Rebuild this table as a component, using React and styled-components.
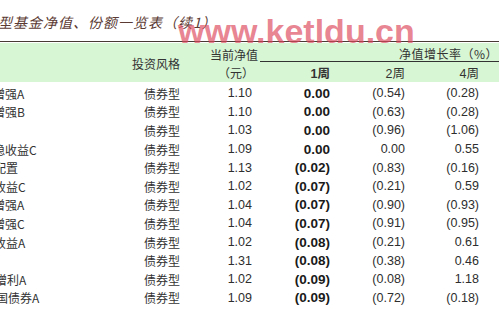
import React from 'react'
import styled, { createGlobalStyle } from 'styled-components'

const GlobalStyle = createGlobalStyle`
  html, body {
    margin: 0;
    padding: 0;
    background: #fff;
    overflow: hidden;
  }
`

const rows = [
  { name: '增强A', shift: -7, nav: '1.10', w1: '0.00', w2: '(0.54)', w4: '(0.28)' },
  { name: '增强B', shift: -7, nav: '1.10', w1: '0.00', w2: '(0.63)', w4: '(0.28)' },
  { name: '', shift: 0, nav: '1.03', w1: '0.00', w2: '(0.96)', w4: '(1.06)' },
  { name: '稳收益C', shift: -7, nav: '1.09', w1: '0.00', w2: '0.00', w4: '0.55' },
  { name: '配置', shift: -6, nav: '1.13', w1: '(0.02)', w2: '(0.83)', w4: '(0.16)' },
  { name: '收益C', shift: -6, nav: '1.02', w1: '(0.07)', w2: '(0.21)', w4: '0.59' },
  { name: '增强A', shift: -7, nav: '1.04', w1: '(0.07)', w2: '(0.90)', w4: '(0.93)' },
  { name: '增强C', shift: -7, nav: '1.04', w1: '(0.07)', w2: '(0.91)', w4: '(0.95)' },
  { name: '收益A', shift: -6, nav: '1.02', w1: '(0.08)', w2: '(0.21)', w4: '0.61' },
  { name: '', shift: 0, nav: '1.31', w1: '(0.08)', w2: '(0.38)', w4: '0.46' },
  { name: '增利A', shift: -5, nav: '1.02', w1: '(0.09)', w2: '(0.08)', w4: '1.18' },
  { name: '国债券A', shift: -4, nav: '1.09', w1: '(0.09)', w2: '(0.72)', w4: '(0.18)' },
]

export default function App() {
  return (
    <Page>
      <GlobalStyle />
      <TitleBar>
        <Title>型基金净值、份额一览表（续1）</Title>
        <Watermark>www.ketldu.cn</Watermark>
      </TitleBar>
      <HeadBand>
        <StyleHead>投资风格</StyleHead>
        <NavHead>当前净值</NavHead>
        <GrowthHead>净值增长率（%）</GrowthHead>
        <NavUnit>（元）</NavUnit>
        <WeekHead $col={4} $bold>1周</WeekHead>
        <WeekHead $col={5}>2周</WeekHead>
        <WeekHead $col={6}>4周</WeekHead>
      </HeadBand>
      <Body>
        {rows.map((r, i) => (
          <Row key={i}>
            <NameCell>
              <span style={{ marginLeft: r.shift }}>{r.name}</span>
            </NameCell>
            <TypeCell>债券型</TypeCell>
            <NumCell>{r.nav}</NumCell>
            <NumCell $bold>{r.w1}</NumCell>
            <NumCell>{r.w2}</NumCell>
            <NumCell>{r.w4}</NumCell>
          </Row>
        ))}
      </Body>
    </Page>
  )
}

const cols = '120px 60px 72px 78px 75px 74px 20px'

const Page = styled.div`
  width: 499px;
  height: 309px;
  overflow: hidden;
  position: relative;
  font-family: "Liberation Sans", "Noto Sans CJK SC", sans-serif;
  color: #2a2a2a;
`

const TitleBar = styled.div`
  height: 42px;
  border-bottom: 1px solid #4a3a36;
  display: flex;
  align-items: center;
  padding-top: 2px;
  box-sizing: border-box;
`

/* the source title is an oblique serif; skew the CJK sans to get close */
const Title = styled.div`
  margin-left: -3px;
  font-family: "Noto Sans CJK SC", sans-serif;
  font-size: 14px;
  letter-spacing: 1px;
  color: #5b3a33;
  white-space: nowrap;
  transform: skewX(-14deg);
  transform-origin: left bottom;
`

const Watermark = styled.div`
  position: absolute;
  left: 178px;
  top: 14px;
  font-family: "Liberation Sans", sans-serif;
  font-weight: bold;
  font-size: 34px;
  line-height: 1;
  color: rgba(222, 72, 92, 0.68);
  white-space: nowrap;
`

const HeadBand = styled.div`
  margin-top: 1px;
  height: 39px;
  background: #d7f6d3;
  display: grid;
  grid-template-columns: ${cols};
  grid-template-rows: 19px 20px;
  font-family: "Noto Sans CJK SC", sans-serif;
  font-size: 12px;
  color: #333;
`

const StyleHead = styled.div`
  grid-column: 2;
  grid-row: 1 / span 2;
  align-self: center;
  justify-self: end;
  white-space: nowrap;
  padding-top: 1px;
`

const NavHead = styled.div`
  grid-column: 3;
  grid-row: 1;
  justify-self: end;
  align-self: center;
  margin-right: -6px;
  white-space: nowrap;
  padding-top: 3px;
`

const NavUnit = styled.div`
  grid-column: 3;
  grid-row: 2;
  justify-self: end;
  align-self: center;
  margin-right: -2px;
  white-space: nowrap;
`

const GrowthHead = styled.div`
  grid-column: 4 / span 4;
  grid-row: 1;
  margin-left: 8px;
  border-bottom: 1px solid #333;
  display: flex;
  justify-content: flex-end;
  align-items: center;
  padding-right: 1px;
  padding-top: 3px;
  letter-spacing: 0.5px;
  white-space: nowrap;
`

const WeekHead = styled.div`
  grid-column: ${p => p.$col};
  grid-row: 2;
  justify-self: end;
  align-self: center;
  font-family: "Liberation Sans", "Noto Sans CJK SC", sans-serif;
  font-weight: ${p => (p.$bold ? 'bold' : 'normal')};
  font-size: 12.5px;
  white-space: nowrap;
`

const Body = styled.div`
  padding-top: 2px;
`

const Row = styled.div`
  display: grid;
  grid-template-columns: ${cols};
  height: 18.6px;
  align-items: center;
`

const NameCell = styled.div`
  font-family: "Noto Sans CJK SC", sans-serif;
  font-size: 12px;
  color: #333;
  white-space: nowrap;
`

const TypeCell = styled.div`
  font-family: "Noto Sans CJK SC", sans-serif;
  font-size: 12px;
  color: #333;
  text-align: right;
  white-space: nowrap;
`

const NumCell = styled.div`
  text-align: right;
  font-size: ${p => (p.$bold ? '13.5px' : '12.5px')};
  font-weight: ${p => (p.$bold ? 'bold' : 'normal')};
  color: ${p => (p.$bold ? '#1a1a1a' : '#2e2e2e')};
  white-space: nowrap;
`
